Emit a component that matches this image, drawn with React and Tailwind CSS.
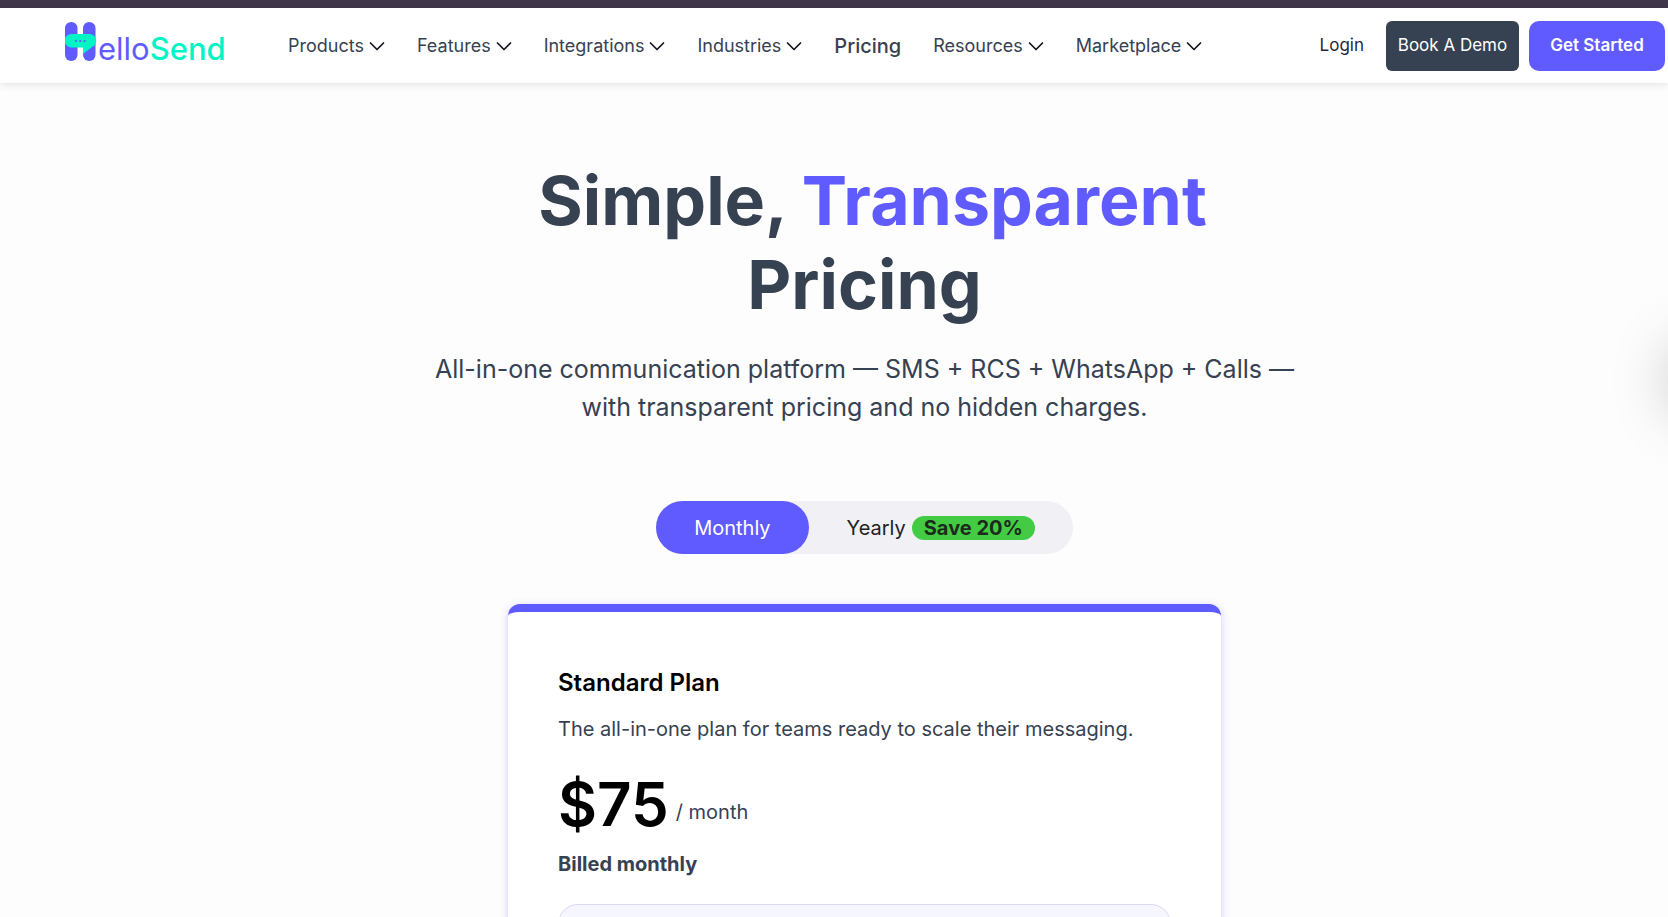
import { useState } from "react";

const navItems = [
  { label: "Products", menu: true },
  { label: "Features", menu: true },
  { label: "Integrations", menu: true },
  { label: "Industries", menu: true },
  { label: "Pricing", menu: false },
  { label: "Resources", menu: true },
  { label: "Marketplace", menu: true },
];

function Chevron() {
  return (
    <svg className="h-4 w-4" viewBox="0 0 16 16" fill="none" stroke="#151522" strokeWidth="1.7" strokeLinecap="round" strokeLinejoin="round" aria-hidden="true">
      <path d="M1.5 5 8 11.5 14.5 5" />
    </svg>
  );
}

function Logo() {
  return (
    <svg className="h-12 w-[164px] shrink-0" viewBox="0 0 164 48" aria-hidden="true">
      <rect x="0" y="0" width="12.5" height="39" rx="6.2" fill="#605bff" />
      <rect x="18" y="0" width="12.5" height="39" rx="6.2" fill="#605bff" />
      <path d="M6.5 12H24.5A6.8 6.8 0 0 1 27.5 24.8L18 32V25.6H6.5A6.8 6.8 0 0 1 6.5 12Z" fill="#00f5c4" />
      <g fill="#605bff">
        <circle cx="11" cy="19" r="1.1" />
        <circle cx="15.3" cy="19" r="1.1" />
        <circle cx="19.6" cy="19" r="1.1" />
      </g>
      <text x="33" y="38" fontFamily="Inter, sans-serif" fontSize="31" fontWeight="400" fill="#605bff">
        ello<tspan fill="#00f5c4" fontWeight="500">Send</tspan>
      </text>
    </svg>
  );
}

function Header() {
  return (
    <header className="relative flex h-[75px] shrink-0 items-center bg-white pr-[3px] pl-[65px] shadow-[0_2px_8px_rgba(0,0,0,0.1)]">
      <a href="#home" aria-label="HelloSend">
        <Logo />
      </a>
      <nav className="ml-[59px] flex items-center gap-8 text-[18px] text-[#374151]">
        {navItems.map((item) =>
          item.menu ? (
            <button key={item.label} type="button" className="flex items-center gap-[5px]">
              {item.label}
              <Chevron />
            </button>
          ) : (
            <a key={item.label} href="#pricing" className="text-[20px] font-medium">
              {item.label}
            </a>
          )
        )}
      </nav>
      <div className="ml-auto flex items-center text-[17px] leading-[27px]">
        <a href="#login" className="mr-[22px] text-[#1f2937]">Login</a>
        <button type="button" className="mr-[10px] h-[50px] w-[133px] rounded-md bg-[#364152] whitespace-nowrap text-white">
          Book A Demo
        </button>
        <button type="button" className="h-[50px] w-[136px] rounded-[10px] bg-[#605bff] font-semibold whitespace-nowrap text-white">
          Get Started
        </button>
      </div>
    </header>
  );
}

function BillingToggle({ yearly, onChange }) {
  return (
    <div className="mt-[75px] flex h-[53px] rounded-full bg-[#f0f0f5] text-[20px] leading-6">
      <button
        type="button"
        onClick={() => onChange(false)}
        className={yearly ? "rounded-full px-[38px] text-[#222222]" : "rounded-full bg-[#605bff] px-[38px] text-white"}
      >
        Monthly
      </button>
      <button
        type="button"
        onClick={() => onChange(true)}
        className={
          yearly
            ? "flex items-center gap-[6px] rounded-full bg-[#605bff] px-[38px] text-white"
            : "flex items-center gap-[6px] rounded-full px-[38px] text-[#222222]"
        }
      >
        Yearly
        <span className="rounded-full bg-[#43cc43] px-3 font-bold text-[#1c2b1c]">Save 20%</span>
      </button>
    </div>
  );
}

export default function App() {
  const [yearly, setYearly] = useState(false);
  return (
    <div className="relative flex h-screen flex-col overflow-hidden bg-[#fdfdfd] font-[Inter,sans-serif]">
      <div className="h-2 shrink-0 bg-[#41374b]" />
      <Header />
      <main className="flex flex-col items-center pt-[75px] pl-[61px] text-[#364152]">
        <h1 className="text-center text-[68px] leading-[84px] font-bold">
          &nbsp;Simple, <span className="text-[#605bff]">Transparent</span>
          <br />
          Pricing
        </h1>
        <p className="mt-6 text-center text-[25px] leading-[38px]">
          All-in-one communication platform — SMS + RCS + WhatsApp + Calls —
          <br />
          with transparent pricing and no hidden charges.
        </p>
        <BillingToggle yearly={yearly} onChange={setYearly} />
        <section className="mt-[50px] w-full max-w-[713px] rounded-xl border-t-8 border-[#605bff] bg-white px-[50px] pt-[53px] pb-[50px] shadow-[0_2px_8px_rgba(99,91,255,0.3)]">
          <h2 className="text-[24px] leading-9 font-semibold text-black">Standard Plan</h2>
          <p className="mt-[13px] text-[20px] leading-[30px]">The all-in-one plan for teams ready to scale their messaging.</p>
          <div className="mt-[30px] flex items-end gap-[7px]">
            <span className="text-[60px] leading-[60px] font-semibold text-black">$75</span>
            <span className="pb-[7px] text-[20px] leading-[30px]">/ month</span>
          </div>
          <p className="mt-[15px] text-[20px] leading-[30px] font-bold">Billed monthly</p>
          <div className="mt-[25px] h-40 rounded-[20px] border border-[#d9d8f5] bg-[#f5f6ff]" />
        </section>
      </main>
      <div className="absolute top-[340px] -right-[72px] h-[70px] w-[70px] rounded-full shadow-[0_5px_60px_rgba(0,0,0,0.25)]" />
    </div>
  );
}
